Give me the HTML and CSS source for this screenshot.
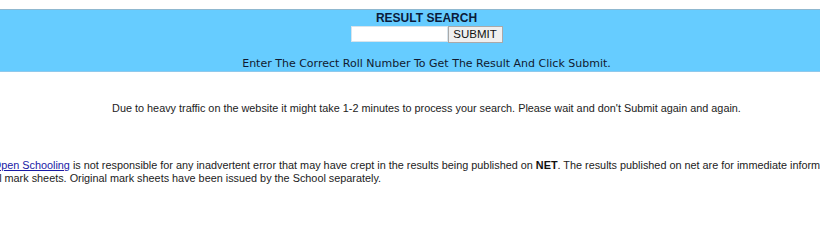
FILE: index.html
```html
<!DOCTYPE html>
<html>
<head>
<meta charset="utf-8">
<title>Result Search</title>
<link rel="stylesheet" href="styles.css">
</head>
<body>
<div class="page">
  <div class="band">
    <div class="title">RESULT SEARCH</div>
    <form class="search">
      <input class="roll" type="text"><button class="submit" type="button">SUBMIT</button>
    </form>
    <div class="hint">Enter The Correct Roll Number To Get The Result And Click Submit.</div>
  </div>
  <p class="traffic">Due to heavy traffic on the website it might take 1-2 minutes to process your search. Please wait and don't Submit again and again.</p>
  <p class="notice">The <a href="#">Open Schooling</a> is not responsible for any inadvertent error that may have crept in the results being published on <b>NET</b>. The results published on net are for immediate information to the examinees and should not be treated as<br>official mark sheets. Original mark sheets have been issued by the School separately.</p>
</div>
</body>
</html>
```
FILE: styles.css
```css
html, body {
  margin: 0;
  padding: 0;
  background: #ffffff;
  overflow: hidden;
}
body {
  padding-top: 9px;
  font-family: "Liberation Sans", Arial, sans-serif;
  font-size: 10.85px;
  color: #222222;
}
.page {
  width: 853px;
}
.band {
  background: #66ccff;
  border-top: 1px solid #8fb8d0;
  border-bottom: 1px solid #8fc9ec;
  text-align: center;
  height: 63px;
  box-sizing: border-box;
  padding-top: 2px;
}
.title {
  font-family: "Liberation Sans", Arial, sans-serif;
  font-weight: bold;
  font-size: 12px;
  line-height: 13px;
  color: #0a1a3a;
}
.search {
  margin: 1px 0 0;
  display: flex;
  justify-content: center;
  height: 16px;
}
.roll {
  width: 97px;
  height: 16px;
  box-sizing: border-box;
  border: 1px solid #d8e4ec;
  background: #ffffff;
  margin: 0;
  padding: 0;
}
.submit {
  width: 55px;
  height: 17px;
  box-sizing: border-box;
  margin: 0;
  padding: 0;
  border: 1px solid #a9a9a9;
  background: #efefef;
  font-family: "Liberation Sans", Arial, sans-serif;
  font-size: 11.5px;
  color: #111111;
  line-height: 15px;
}
.hint {
  margin-top: 15px;
  font-family: "DejaVu Sans", Verdana, sans-serif;
  font-size: 11px;
  line-height: 13px;
  color: #101a30;
}
.traffic {
  margin: 29px 0 0;
  text-align: center;
  line-height: 15px;
}
.notice {
  margin: 43px 0 0 -29px;
  white-space: nowrap;
  line-height: 12.5px;
}
.notice a {
  color: #1a1aa6;
}
.notice b {
  color: #111111;
}
```
